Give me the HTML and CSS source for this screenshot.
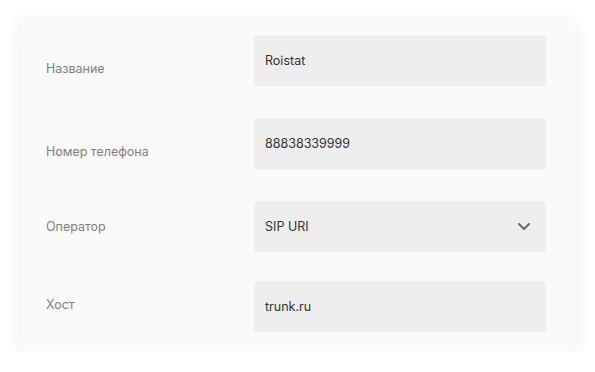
FILE: index.html
```html
<!DOCTYPE html>
<html lang="ru">
<head>
    <meta charset="UTF-8">
    <title>Транк</title>
    <link rel="stylesheet" href="styles.css">
</head>
<body>
<form class="trunk-card">
    <div class="form-row has-hint">
        <label class="form-label">Название</label>
        <div class="form-control">
            <div class="field field-open">Roistat</div>
            <div class="field-hint"></div>
        </div>
    </div>

    <div class="form-row has-hint">
        <label class="form-label">Номер телефона</label>
        <div class="form-control">
            <div class="field field-open">88838339999</div>
            <div class="field-hint"></div>
        </div>
    </div>

    <div class="form-row row-select">
        <label class="form-label">Оператор</label>
        <div class="form-control">
            <div class="field field-select">
                <span>SIP URI</span>
                <svg class="chevron" viewBox="0 0 12 7" fill="none" stroke="currentColor" stroke-width="2" stroke-linecap="round" stroke-linejoin="round">
                    <polyline points="1 1 6 6 11 1"></polyline>
                </svg>
            </div>
        </div>
    </div>

    <div class="form-row row-last">
        <label class="form-label">Хост</label>
        <div class="form-control">
            <div class="field field-open">trunk.ru</div>
        </div>
    </div>
</form>
</body>
</html>
```

FILE: styles.css
```css
* {
    margin: 0;
    padding: 0;
    box-sizing: border-box;
    font-family: "Inter", "Open Sans", sans-serif;
}

body {
    background-color: #ffffff;
    padding: 18px 20px 0;
}

.trunk-card {
    width: 555px;
    background-color: #fafafa;
    border-radius: 5px;
    padding: 17px 29px 19px 26px;
    box-shadow: 0 4px 18px rgba(0, 0, 0, 0.07), 0 1px 3px rgba(0, 0, 0, 0.03);
    display: flex;
    flex-direction: column;
    gap: 16px;
}

.form-row {
    display: flex;
    align-items: center;
}

.row-select {
    margin-bottom: 13px;
}

.row-last .form-label {
    margin-top: -4px;
}

.form-label {
    width: 208px;
    font-size: 12.5px;
    color: #7f7f7f;
}

.form-control {
    flex: 1;
}

.field {
    height: 51px;
    background-color: #eeeeee;
    border-radius: 4px;
    padding: 0 11px;
    display: flex;
    align-items: center;
    font-size: 12.5px;
    color: #333333;
}

.field-open {
    border-radius: 4px 4px 0 0;
}

.field-select {
    justify-content: space-between;
    padding-right: 16px;
}

.chevron {
    width: 12px;
    height: 7px;
    color: #6b6b6b;
}

.field-hint {
    height: 16px;
}
```
